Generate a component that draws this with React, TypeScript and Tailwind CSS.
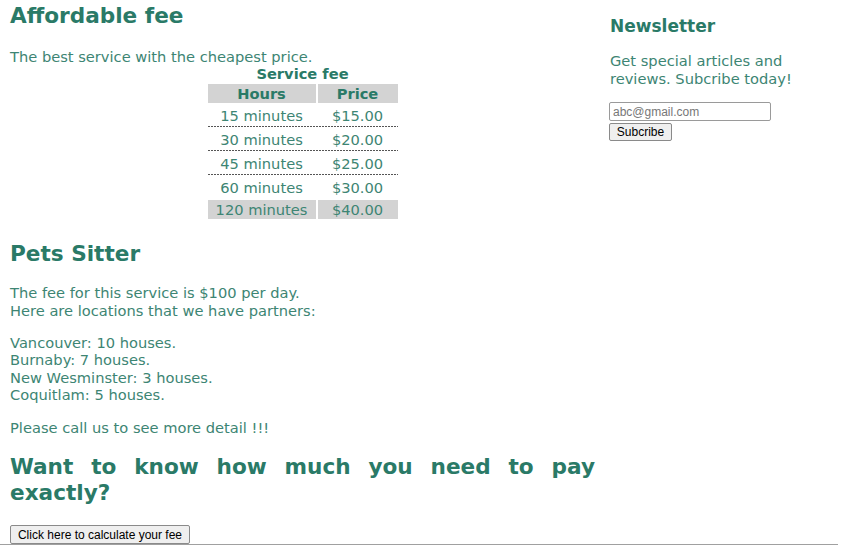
import React from "react";

const rows = [
  ["15 minutes", "$15.00"],
  ["30 minutes", "$20.00"],
  ["45 minutes", "$25.00"],
  ["60 minutes", "$30.00"],
];

export default function App() {
  return (
    <div className="w-[844px] h-[548px] bg-white overflow-hidden" style={{ fontFamily: '"DejaVu Sans", Verdana, sans-serif' }}>
      <div className="flex px-[10px]">
        {/* Left column */}
        <div className="w-[585px] text-[#3d8573] text-[14.65px] leading-[17.3px]">
          <h1 className="mt-[3px] text-[21.6px] leading-[25px] font-bold text-[#2a7a67]">Affordable fee</h1>
          <p className="mt-[19.5px]">The best service with the cheapest price.</p>
          <div className="flex flex-col items-center">
            <div className="font-bold text-[#2a7a67] leading-[17px]">Service fee</div>
            <div className="w-[190px] mt-[2px]">
              <div className="flex gap-[2px] h-[19px] items-center font-bold text-[#2a7a67]">
                <div className="w-[108px] h-full bg-[#d3d3d3] flex items-center justify-center">Hours</div>
                <div className="flex-1 h-full bg-[#d3d3d3] flex items-center justify-center">Price</div>
              </div>
              {rows.map(([h, p], i) => (
                <div key={h} className="mt-[1px] flex flex-col h-[23px]">
                  <div className="flex gap-[2px] flex-1 pt-[2px]">
                    <div className="w-[108px] flex items-center justify-center">{h}</div>
                    <div className="flex-1 flex items-center justify-center">{p}</div>
                  </div>
                  {i < 3 ? (
                    <div className="h-[1px] w-full bg-[repeating-linear-gradient(90deg,#555_0_2px,transparent_2px_3px)]" />
                  ) : (
                    <div className="h-[1px]" />
                  )}
                </div>
              ))}
              <div className="mt-[1px] flex gap-[2px] h-[19px]">
                <div className="w-[108px] bg-[#d3d3d3] flex items-center justify-center">120 minutes</div>
                <div className="flex-1 bg-[#d3d3d3] flex items-center justify-center">$40.00</div>
              </div>
            </div>
          </div>
          <h1 className="mt-[22.5px] text-[21.6px] leading-[25px] font-bold text-[#2a7a67]">Pets Sitter</h1>
          <p className="mt-[18px]">
            The fee for this service is $100 per day.
            <br />
            Here are locations that we have partners:
          </p>
          <p className="mt-[15.3px]">
            Vancouver: 10 houses.
            <br />
            Burnaby: 7 houses.
            <br />
            New Wesminster: 3 houses.
            <br />
            Coquitlam: 5 houses.
          </p>
          <p className="mt-[15.3px]">Please call us to see more detail !!!</p>
          <h1 className="mt-[18px] text-[21.6px] leading-[26.5px] font-bold text-[#2a7a67] text-justify">
            Want to know how much you need to pay exactly?
          </h1>
          <div className="mt-[18.5px] flex">
            <button
              className="h-[19px] w-[180px] px-[6px] bg-[#efefef] border border-[#8a8a8a] rounded-[2px] text-[12px] text-black leading-none"
              style={{ fontFamily: '"Liberation Sans", Arial, sans-serif' }}
            >
              Click here to calculate your fee
            </button>
          </div>
        </div>
        {/* Right column */}
        <div className="ml-[15px] w-[224px] text-[#3d8573] text-[14.65px] leading-[17.3px]">
          <h2 className="mt-[15.5px] text-[17px] leading-[20.7px] font-bold text-[#2a7a67]">Newsletter</h2>
          <p className="mt-[16px]">Get special articles and reviews. Subcribe today!</p>
          <div
            className="mt-[15.5px] flex flex-col items-start -ml-[1px]"
            style={{ fontFamily: '"Liberation Sans", Arial, sans-serif' }}
          >
            <input
              className="w-[162px] h-[19px] border border-[#9a9a9a] rounded-[2px] px-[3px] text-[12px] text-black placeholder:text-[#777] outline-none"
              placeholder="abc@gmail.com"
            />
            <button className="mt-[2px] h-[18px] w-[63px] bg-[#efefef] border border-[#8a8a8a] rounded-[2px] text-[12px] text-black leading-none">
              Subcribe
            </button>
          </div>
        </div>
      </div>
      <div className="w-[838px] border-t border-[#a0a0a0]" />
    </div>
  );
}
